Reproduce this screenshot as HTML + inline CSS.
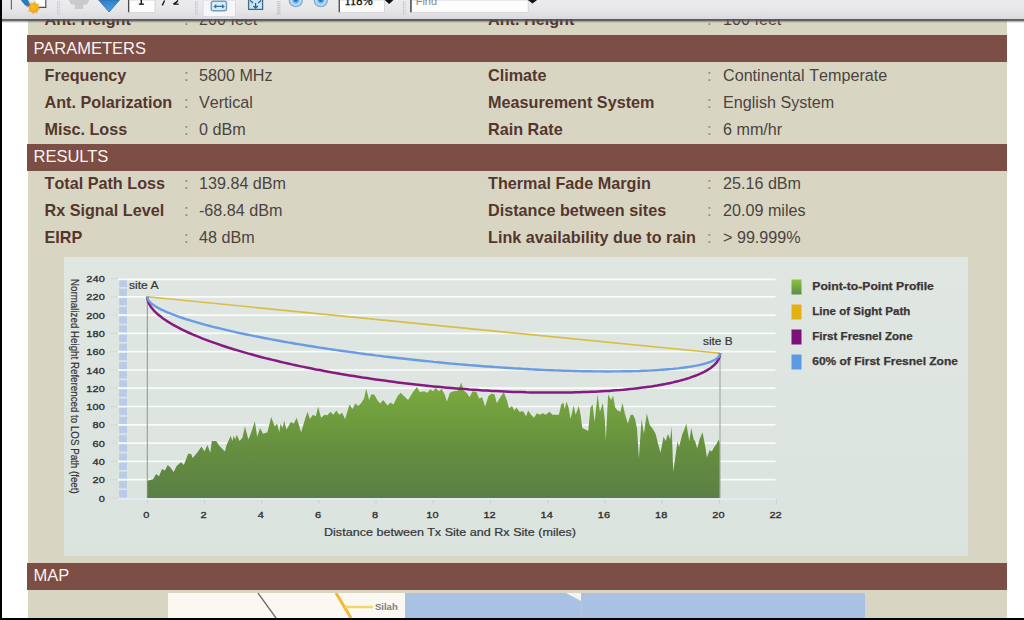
<!DOCTYPE html>
<html><head><meta charset="utf-8"><title>Report</title>
<style>
html,body{margin:0;padding:0;}
body{width:1024px;height:620px;overflow:hidden;background:#fff;position:relative;font-family:"Liberation Sans",sans-serif;}
.abs{position:absolute;}
#page{left:28px;top:18px;width:979px;height:602px;background:#d8d6c3;}
.bar{position:absolute;left:27px;width:980px;height:27px;background:#7d4e45;color:#fbf3ee;font-size:16.5px;line-height:26px;}
.bar span{position:absolute;left:6.5px;top:0;}
.lbl{position:absolute;font-kerning:none;font-weight:bold;font-size:16.2px;color:#55362e;white-space:nowrap;line-height:20px;}
.val{position:absolute;font-kerning:none;font-size:16.15px;color:#4c433f;white-space:nowrap;line-height:20px;}
.col{position:absolute;font-size:16.5px;color:#8b857c;line-height:20px;}
#tb{left:0;top:0;width:1024px;height:19px;background:linear-gradient(#ececee,#e6e6e8 55%,#dadadd);}
#tbsh{left:0;top:18.5px;width:1024px;height:4.5px;background:linear-gradient(rgba(80,80,82,.92),rgba(80,80,82,.85) 38%,rgba(95,95,95,.4) 65%,rgba(120,120,120,0));}
#lb{left:0;top:0;width:2px;height:620px;background:#000;}
#bb{left:0;top:618px;width:1024px;height:2px;background:#000;}
</style></head><body>
<div id="page" class="abs"></div>

<!-- rows -->
<div class="lbl" style="left:44.5px;top:9.3px;">Ant. Height</div><div class="col" style="left:184px;top:9.3px;">:</div><div class="val" style="left:199px;top:9.3px;">200 feet</div>
<div class="lbl" style="left:488px;top:9.3px;">Ant. Height</div><div class="col" style="left:707px;top:9.3px;">:</div><div class="val" style="left:723px;top:9.3px;">100 feet</div>

<div class="bar" style="top:35px;"><span>PARAMETERS</span></div>
<div class="lbl" style="left:44.5px;top:64.5px;">Frequency</div><div class="col" style="left:184px;top:64.5px;">:</div><div class="val" style="left:199px;top:64.5px;">5800 MHz</div>
<div class="lbl" style="left:44.5px;top:91.5px;">Ant. Polarization</div><div class="col" style="left:184px;top:91.5px;">:</div><div class="val" style="left:199px;top:91.5px;">Vertical</div>
<div class="lbl" style="left:44.5px;top:118.5px;">Misc. Loss</div><div class="col" style="left:184px;top:118.5px;">:</div><div class="val" style="left:199px;top:118.5px;">0 dBm</div>
<div class="lbl" style="left:488px;top:64.5px;">Climate</div><div class="col" style="left:707px;top:64.5px;">:</div><div class="val" style="left:723px;top:64.5px;">Continental Temperate</div>
<div class="lbl" style="left:488px;top:91.5px;">Measurement System</div><div class="col" style="left:707px;top:91.5px;">:</div><div class="val" style="left:723px;top:91.5px;">English System</div>
<div class="lbl" style="left:488px;top:118.5px;">Rain Rate</div><div class="col" style="left:707px;top:118.5px;">:</div><div class="val" style="left:723px;top:118.5px;">6 mm/hr</div>

<div class="bar" style="top:144px;"><span style="top:-1px">RESULTS</span></div>
<div class="lbl" style="left:44.5px;top:173.4px;">Total Path Loss</div><div class="col" style="left:184px;top:173.4px;">:</div><div class="val" style="left:199px;top:173.4px;">139.84 dBm</div>
<div class="lbl" style="left:44.5px;top:200.4px;">Rx Signal Level</div><div class="col" style="left:184px;top:200.4px;">:</div><div class="val" style="left:199px;top:200.4px;">-68.84 dBm</div>
<div class="lbl" style="left:44.5px;top:227.4px;">EIRP</div><div class="col" style="left:184px;top:227.4px;">:</div><div class="val" style="left:199px;top:227.4px;">48 dBm</div>
<div class="lbl" style="left:488px;top:173.4px;">Thermal Fade Margin</div><div class="col" style="left:707px;top:173.4px;">:</div><div class="val" style="left:723px;top:173.4px;">25.16 dBm</div>
<div class="lbl" style="left:488px;top:200.4px;">Distance between sites</div><div class="col" style="left:707px;top:200.4px;">:</div><div class="val" style="left:723px;top:200.4px;">20.09 miles</div>
<div class="lbl" style="left:488px;top:227.4px;">Link availability due to rain</div><div class="col" style="left:707px;top:227.4px;">:</div><div class="val" style="left:723px;top:227.4px;">&gt; 99.999%</div>

<!-- chart -->
<svg class="abs" style="left:0;top:0;" width="1024" height="620" viewBox="0 0 1024 620">
<defs>
<linearGradient id="tg" x1="0" y1="0" x2="0" y2="1" gradientUnits="userSpaceOnUse" >
<stop offset="0" stop-color="#7aab3c"/><stop offset="1" stop-color="#547c3a"/></linearGradient>
<linearGradient id="tg2" gradientUnits="userSpaceOnUse" x1="0" y1="381" x2="0" y2="498">
<stop offset="0" stop-color="#7cad3e"/><stop offset="0.55" stop-color="#66903f"/><stop offset="1" stop-color="#5a7f45"/></linearGradient>
<linearGradient id="lg" x1="0" y1="0" x2="0" y2="1"><stop offset="0" stop-color="#8bc53a"/><stop offset="1" stop-color="#5d8a48"/></linearGradient>
<linearGradient id="pg" x1="0" y1="0" x2="0" y2="1"><stop offset="0" stop-color="#e0e7e3"/><stop offset="1" stop-color="#dbe3df"/></linearGradient>
</defs>
<rect x="64" y="257" width="904" height="299" fill="url(#pg)"/>
<g><rect x="119.2" y="490.0" width="7.8" height="7.5" fill="#b9cbe6"/><rect x="119.2" y="480.8" width="7.8" height="7.5" fill="#b9cbe6"/><rect x="119.2" y="471.7" width="7.8" height="7.5" fill="#b9cbe6"/><rect x="119.2" y="462.5" width="7.8" height="7.5" fill="#b9cbe6"/><rect x="119.2" y="453.4" width="7.8" height="7.5" fill="#b9cbe6"/><rect x="119.2" y="444.2" width="7.8" height="7.5" fill="#b9cbe6"/><rect x="119.2" y="435.1" width="7.8" height="7.5" fill="#b9cbe6"/><rect x="119.2" y="425.9" width="7.8" height="7.5" fill="#b9cbe6"/><rect x="119.2" y="416.8" width="7.8" height="7.5" fill="#b9cbe6"/><rect x="119.2" y="407.6" width="7.8" height="7.5" fill="#b9cbe6"/><rect x="119.2" y="398.5" width="7.8" height="7.5" fill="#b9cbe6"/><rect x="119.2" y="389.3" width="7.8" height="7.5" fill="#b9cbe6"/><rect x="119.2" y="380.2" width="7.8" height="7.5" fill="#b9cbe6"/><rect x="119.2" y="371.1" width="7.8" height="7.5" fill="#b9cbe6"/><rect x="119.2" y="361.9" width="7.8" height="7.5" fill="#b9cbe6"/><rect x="119.2" y="352.8" width="7.8" height="7.5" fill="#b9cbe6"/><rect x="119.2" y="343.6" width="7.8" height="7.5" fill="#b9cbe6"/><rect x="119.2" y="334.5" width="7.8" height="7.5" fill="#b9cbe6"/><rect x="119.2" y="325.3" width="7.8" height="7.5" fill="#b9cbe6"/><rect x="119.2" y="316.2" width="7.8" height="7.5" fill="#b9cbe6"/><rect x="119.2" y="307.0" width="7.8" height="7.5" fill="#b9cbe6"/><rect x="119.2" y="297.9" width="7.8" height="7.5" fill="#b9cbe6"/><rect x="119.2" y="288.7" width="7.8" height="7.5" fill="#b9cbe6"/><rect x="119.2" y="279.6" width="7.8" height="7.5" fill="#b9cbe6"/></g>
<g><line x1="110" y1="498.0" x2="118" y2="498.0" stroke="#d2d8d6" stroke-width="1"/><line x1="110" y1="479.7" x2="118" y2="479.7" stroke="#d2d8d6" stroke-width="1"/><line x1="110" y1="461.4" x2="118" y2="461.4" stroke="#d2d8d6" stroke-width="1"/><line x1="110" y1="443.1" x2="118" y2="443.1" stroke="#d2d8d6" stroke-width="1"/><line x1="110" y1="424.8" x2="118" y2="424.8" stroke="#d2d8d6" stroke-width="1"/><line x1="110" y1="406.5" x2="118" y2="406.5" stroke="#d2d8d6" stroke-width="1"/><line x1="110" y1="388.2" x2="118" y2="388.2" stroke="#d2d8d6" stroke-width="1"/><line x1="110" y1="370.0" x2="118" y2="370.0" stroke="#d2d8d6" stroke-width="1"/><line x1="110" y1="351.7" x2="118" y2="351.7" stroke="#d2d8d6" stroke-width="1"/><line x1="110" y1="333.4" x2="118" y2="333.4" stroke="#d2d8d6" stroke-width="1"/><line x1="110" y1="315.1" x2="118" y2="315.1" stroke="#d2d8d6" stroke-width="1"/><line x1="110" y1="296.8" x2="118" y2="296.8" stroke="#d2d8d6" stroke-width="1"/><line x1="110" y1="278.5" x2="118" y2="278.5" stroke="#d2d8d6" stroke-width="1"/><line x1="147.3" y1="499.5" x2="147.3" y2="503.5" stroke="#c3d0e8" stroke-width="1.2"/><line x1="204.5" y1="499.5" x2="204.5" y2="503.5" stroke="#c3d0e8" stroke-width="1.2"/><line x1="261.7" y1="499.5" x2="261.7" y2="503.5" stroke="#c3d0e8" stroke-width="1.2"/><line x1="318.9" y1="499.5" x2="318.9" y2="503.5" stroke="#c3d0e8" stroke-width="1.2"/><line x1="376.1" y1="499.5" x2="376.1" y2="503.5" stroke="#c3d0e8" stroke-width="1.2"/><line x1="433.3" y1="499.5" x2="433.3" y2="503.5" stroke="#c3d0e8" stroke-width="1.2"/><line x1="490.5" y1="499.5" x2="490.5" y2="503.5" stroke="#c3d0e8" stroke-width="1.2"/><line x1="547.7" y1="499.5" x2="547.7" y2="503.5" stroke="#c3d0e8" stroke-width="1.2"/><line x1="604.9" y1="499.5" x2="604.9" y2="503.5" stroke="#c3d0e8" stroke-width="1.2"/><line x1="662.1" y1="499.5" x2="662.1" y2="503.5" stroke="#c3d0e8" stroke-width="1.2"/><line x1="719.3" y1="499.5" x2="719.3" y2="503.5" stroke="#c3d0e8" stroke-width="1.2"/><line x1="776.5" y1="499.5" x2="776.5" y2="503.5" stroke="#c3d0e8" stroke-width="1.2"/></g>
<g><line x1="118" y1="499" x2="775.5" y2="499" stroke="#e1e9f1" stroke-width="2"/><line x1="118" y1="479.7" x2="775.5" y2="479.7" stroke="#fff" stroke-width="1.7" opacity=".85"/><line x1="118" y1="461.4" x2="775.5" y2="461.4" stroke="#fff" stroke-width="1.7" opacity=".85"/><line x1="118" y1="443.1" x2="775.5" y2="443.1" stroke="#fff" stroke-width="1.7" opacity=".85"/><line x1="118" y1="424.8" x2="775.5" y2="424.8" stroke="#fff" stroke-width="1.7" opacity=".85"/><line x1="118" y1="406.5" x2="775.5" y2="406.5" stroke="#fff" stroke-width="1.7" opacity=".85"/><line x1="118" y1="388.2" x2="775.5" y2="388.2" stroke="#fff" stroke-width="1.7" opacity=".85"/><line x1="118" y1="370.0" x2="775.5" y2="370.0" stroke="#fff" stroke-width="1.7" opacity=".85"/><line x1="118" y1="351.7" x2="775.5" y2="351.7" stroke="#fff" stroke-width="1.7" opacity=".85"/><line x1="118" y1="333.4" x2="775.5" y2="333.4" stroke="#fff" stroke-width="1.7" opacity=".85"/><line x1="118" y1="315.1" x2="775.5" y2="315.1" stroke="#fff" stroke-width="1.7" opacity=".85"/><line x1="118" y1="296.8" x2="775.5" y2="296.8" stroke="#fff" stroke-width="1.7" opacity=".85"/><line x1="118" y1="279.3" x2="775.5" y2="279.3" stroke="#fff" stroke-width="1.7" opacity=".85"/></g>
<path d="M147.3,498.0 L147.3,480.7 L153.2,479.2 L156.1,473.9 L159.0,476.3 L162.0,468.9 L164.9,470.4 L167.8,465.1 L170.8,468.1 L173.7,471.9 L176.6,466.0 L181.0,462.2 L183.9,465.1 L188.3,453.4 L191.3,454.3 L192.7,458.1 L197.1,452.8 L201.5,446.4 L204.5,451.4 L207.4,444.9 L210.3,452.8 L211.8,441.1 L216.2,441.1 L219.1,445.5 L222.0,448.4 L225.0,451.4 L226.4,445.5 L230.8,435.8 L232.3,441.1 L233.8,435.8 L235.2,439.6 L236.7,434.7 L239.6,441.1 L242.5,437.6 L244.9,426.5 L248.4,439.6 L251.3,432.3 L254.8,421.2 L257.2,436.7 L260.1,427.9 L263.0,433.8 L267.4,432.3 L271.2,417.1 L274.8,426.5 L277.1,423.5 L279.2,432.3 L280.6,423.5 L282.7,427.9 L284.1,420.6 L286.5,429.4 L290.9,422.1 L293.8,423.5 L296.7,417.7 L301.1,432.3 L305.5,417.7 L307.6,411.8 L309.9,419.1 L312.9,414.7 L315.8,416.2 L318.1,406.5 L321.1,417.7 L324.6,414.7 L327.5,415.3 L330.4,411.8 L333.4,414.7 L336.3,410.4 L339.2,414.7 L342.1,412.7 L345.1,419.1 L349.5,404.5 L352.4,408.9 L355.3,403.6 L358.3,406.0 L361.2,403.0 L364.1,398.6 L366.2,388.4 L369.1,400.1 L371.4,394.2 L374.4,394.8 L377.3,400.1 L380.2,403.6 L383.2,400.1 L387.6,405.4 L390.5,402.4 L393.4,404.5 L397.8,395.7 L400.7,392.8 L403.7,395.7 L408.1,400.1 L412.5,392.8 L416.9,386.9 L419.8,391.9 L424.2,391.3 L427.1,392.8 L430.0,389.8 L430.0,389.0 L432.9,391.3 L435.9,387.8 L438.8,391.3 L441.7,389.0 L444.6,394.2 L447.0,401.6 L449.9,392.8 L453.4,391.3 L457.8,390.7 L461.3,382.5 L463.7,390.7 L466.6,392.8 L469.6,397.2 L472.5,391.3 L476.3,391.9 L479.2,398.6 L482.1,397.2 L485.1,406.5 L488.6,395.7 L491.5,393.7 L494.5,394.2 L496.8,403.0 L500.3,397.2 L503.8,391.9 L506.8,400.1 L509.1,408.3 L512.0,406.0 L514.4,410.4 L516.4,407.4 L519.4,411.8 L523.2,411.2 L526.1,416.2 L528.1,410.4 L531.1,414.7 L534.0,417.7 L536.9,413.3 L539.9,414.7 L542.8,413.3 L545.7,414.7 L549.5,411.8 L552.5,414.7 L556.0,414.7 L558.9,414.7 L561.2,404.5 L563.3,402.4 L564.8,408.9 L566.5,401.6 L568.6,407.4 L570.6,419.1 L573.6,405.4 L575.6,414.7 L578.8,406.0 L580.6,414.7 L582.3,427.9 L585.3,429.4 L588.2,430.9 L590.5,407.4 L592.6,404.5 L594.6,422.1 L597.6,394.2 L599.9,411.8 L602.9,403.0 L604.9,420.6 L605.8,441.1 L608.1,394.2 L611.1,400.1 L613.1,395.7 L615.2,407.4 L617.5,410.4 L620.4,411.8 L622.5,403.0 L624.8,413.3 L627.8,423.5 L630.7,414.7 L633.0,414.7 L635.1,419.1 L637.1,429.4 L638.9,458.7 L641.5,419.1 L643.9,433.8 L646.8,413.3 L649.7,425.0 L653.2,429.4 L655.6,433.8 L658.5,445.5 L660.6,452.8 L663.5,436.7 L665.8,441.1 L667.9,433.8 L670.2,439.6 L671.7,426.5 L673.2,471.9 L677.6,441.1 L679.0,447.0 L682.5,433.8 L684.9,427.9 L686.3,423.5 L689.3,441.1 L691.3,427.9 L693.7,439.6 L695.1,441.1 L697.2,448.4 L699.5,439.6 L702.5,432.3 L705.4,447.0 L706.9,457.2 L709.8,449.9 L711.8,451.4 L714.2,447.0 L716.5,444.0 L718.6,439.6 L720.0,444.0 L720.0,498.0 Z" fill="url(#tg2)"/>
<line x1="147.3" y1="297" x2="147.3" y2="498" stroke="#7f8f5c" stroke-width="1" opacity=".85"/>
<line x1="720" y1="353" x2="720" y2="498" stroke="#a9aaa0" stroke-width="1.2"/>
<line x1="147.3" y1="296.8" x2="720" y2="353.3" stroke="#d9bd44" stroke-width="1.6"/>
<path d="M147.3,296.8 L147.3,297.8 L147.4,298.7 L147.6,299.7 L147.9,300.7 L148.2,301.7 L148.6,302.7 L149.0,303.7 L149.6,304.7 L150.2,305.7 L150.8,306.7 L151.6,307.8 L152.4,308.8 L153.2,309.8 L154.2,310.9 L155.2,311.9 L156.3,312.9 L157.4,314.0 L158.7,315.0 L160.0,316.1 L161.3,317.1 L162.7,318.2 L164.2,319.3 L165.8,320.3 L167.4,321.4 L169.1,322.4 L170.9,323.5 L172.7,324.6 L174.6,325.6 L176.5,326.7 L178.5,327.7 L180.6,328.8 L182.7,329.9 L184.9,330.9 L187.2,332.0 L189.5,333.0 L191.9,334.1 L194.3,335.1 L196.8,336.2 L199.4,337.2 L202.0,338.3 L204.7,339.3 L207.4,340.3 L210.2,341.4 L213.0,342.4 L215.9,343.4 L218.9,344.4 L221.9,345.5 L224.9,346.5 L228.0,347.5 L231.2,348.5 L234.4,349.5 L237.6,350.4 L240.9,351.4 L244.3,352.4 L247.7,353.4 L251.1,354.3 L254.6,355.3 L258.1,356.2 L261.7,357.2 L265.3,358.1 L269.0,359.0 L272.7,359.9 L276.4,360.8 L280.2,361.7 L284.0,362.6 L287.9,363.5 L291.8,364.4 L295.7,365.2 L299.7,366.1 L303.6,366.9 L307.7,367.7 L311.7,368.5 L315.8,369.4 L319.9,370.1 L324.1,370.9 L328.2,371.7 L332.4,372.5 L336.7,373.2 L340.9,374.0 L345.2,374.7 L349.5,375.4 L353.8,376.1 L358.1,376.8 L362.4,377.5 L366.8,378.1 L371.2,378.8 L375.6,379.4 L380.0,380.0 L384.4,380.6 L388.9,381.2 L393.3,381.8 L397.8,382.4 L402.2,382.9 L406.7,383.5 L411.2,384.0 L415.7,384.5 L420.2,385.0 L424.7,385.5 L429.2,386.0 L433.6,386.4 L438.1,386.8 L442.6,387.3 L447.1,387.7 L451.6,388.1 L456.1,388.4 L460.6,388.8 L465.1,389.1 L469.5,389.5 L474.0,389.8 L478.4,390.1 L482.9,390.4 L487.3,390.6 L491.7,390.9 L496.1,391.1 L500.5,391.3 L504.9,391.5 L509.2,391.7 L513.5,391.9 L517.8,392.0 L522.1,392.1 L526.4,392.3 L530.6,392.4 L534.9,392.4 L539.1,392.5 L543.2,392.6 L547.4,392.6 L551.5,392.6 L555.6,392.6 L559.6,392.6 L563.7,392.6 L567.6,392.5 L571.6,392.4 L575.5,392.3 L579.4,392.2 L583.3,392.1 L587.1,392.0 L590.9,391.8 L594.6,391.7 L598.3,391.5 L602.0,391.3 L605.6,391.1 L609.2,390.9 L612.7,390.6 L616.2,390.3 L619.6,390.1 L623.0,389.8 L626.4,389.4 L629.7,389.1 L632.9,388.8 L636.1,388.4 L639.3,388.0 L642.4,387.6 L645.4,387.2 L648.4,386.8 L651.4,386.4 L654.3,385.9 L657.1,385.5 L659.9,385.0 L662.6,384.5 L665.3,384.0 L667.9,383.4 L670.5,382.9 L673.0,382.4 L675.4,381.8 L677.8,381.2 L680.1,380.6 L682.4,380.0 L684.6,379.4 L686.7,378.7 L688.8,378.1 L690.8,377.4 L692.7,376.7 L694.6,376.0 L696.4,375.3 L698.2,374.6 L699.9,373.9 L701.5,373.2 L703.1,372.4 L704.6,371.7 L706.0,370.9 L707.3,370.1 L708.6,369.3 L709.9,368.5 L711.0,367.7 L712.1,366.8 L713.1,366.0 L714.1,365.2 L714.9,364.3 L715.7,363.4 L716.5,362.6 L717.1,361.7 L717.7,360.8 L718.3,359.9 L718.7,358.9 L719.1,358.0 L719.4,357.1 L719.7,356.2 L719.9,355.2 L720.0,354.3 L720.0,353.3" fill="none" stroke="#861a80" stroke-width="2.5"/>
<path d="M147.3,296.8 L147.3,297.4 L147.4,298.0 L147.6,298.6 L147.9,299.2 L148.2,299.8 L148.6,300.4 L149.0,301.0 L149.6,301.6 L150.2,302.3 L150.8,302.9 L151.6,303.6 L152.4,304.2 L153.2,304.9 L154.2,305.5 L155.2,306.2 L156.3,306.8 L157.4,307.5 L158.7,308.2 L160.0,308.9 L161.3,309.6 L162.7,310.2 L164.2,310.9 L165.8,311.6 L167.4,312.3 L169.1,313.0 L170.9,313.7 L172.7,314.5 L174.6,315.2 L176.5,315.9 L178.5,316.6 L180.6,317.3 L182.7,318.0 L184.9,318.8 L187.2,319.5 L189.5,320.2 L191.9,320.9 L194.3,321.7 L196.8,322.4 L199.4,323.1 L202.0,323.8 L204.7,324.6 L207.4,325.3 L210.2,326.0 L213.0,326.8 L215.9,327.5 L218.9,328.2 L221.9,328.9 L224.9,329.7 L228.0,330.4 L231.2,331.1 L234.4,331.8 L237.6,332.6 L240.9,333.3 L244.3,334.0 L247.7,334.7 L251.1,335.4 L254.6,336.1 L258.1,336.8 L261.7,337.5 L265.3,338.2 L269.0,338.9 L272.7,339.6 L276.4,340.3 L280.2,341.0 L284.0,341.7 L287.9,342.4 L291.8,343.0 L295.7,343.7 L299.7,344.4 L303.6,345.0 L307.7,345.7 L311.7,346.3 L315.8,347.0 L319.9,347.6 L324.1,348.3 L328.2,348.9 L332.4,349.5 L336.7,350.1 L340.9,350.7 L345.2,351.3 L349.5,351.9 L353.8,352.5 L358.1,353.1 L362.4,353.7 L366.8,354.3 L371.2,354.8 L375.6,355.4 L380.0,355.9 L384.4,356.5 L388.9,357.0 L393.3,357.5 L397.8,358.0 L402.2,358.5 L406.7,359.0 L411.2,359.5 L415.7,360.0 L420.2,360.5 L424.7,361.0 L429.2,361.4 L433.6,361.9 L438.1,362.3 L442.6,362.7 L447.1,363.2 L451.6,363.6 L456.1,364.0 L460.6,364.4 L465.1,364.7 L469.5,365.1 L474.0,365.5 L478.4,365.8 L482.9,366.2 L487.3,366.5 L491.7,366.8 L496.1,367.1 L500.5,367.4 L504.9,367.7 L509.2,368.0 L513.5,368.3 L517.8,368.5 L522.1,368.8 L526.4,369.0 L530.6,369.3 L534.9,369.5 L539.1,369.7 L543.2,369.9 L547.4,370.1 L551.5,370.2 L555.6,370.4 L559.6,370.5 L563.7,370.7 L567.6,370.8 L571.6,370.9 L575.5,371.0 L579.4,371.1 L583.3,371.2 L587.1,371.3 L590.9,371.3 L594.6,371.4 L598.3,371.4 L602.0,371.4 L605.6,371.5 L609.2,371.5 L612.7,371.4 L616.2,371.4 L619.6,371.4 L623.0,371.3 L626.4,371.3 L629.7,371.2 L632.9,371.1 L636.1,371.1 L639.3,371.0 L642.4,370.8 L645.4,370.7 L648.4,370.6 L651.4,370.4 L654.3,370.3 L657.1,370.1 L659.9,369.9 L662.6,369.7 L665.3,369.5 L667.9,369.3 L670.5,369.1 L673.0,368.9 L675.4,368.6 L677.8,368.4 L680.1,368.1 L682.4,367.8 L684.6,367.5 L686.7,367.2 L688.8,366.9 L690.8,366.6 L692.7,366.3 L694.6,365.9 L696.4,365.6 L698.2,365.2 L699.9,364.9 L701.5,364.5 L703.1,364.1 L704.6,363.7 L706.0,363.3 L707.3,362.9 L708.6,362.5 L709.9,362.0 L711.0,361.6 L712.1,361.1 L713.1,360.7 L714.1,360.2 L714.9,359.7 L715.7,359.2 L716.5,358.7 L717.1,358.2 L717.7,357.7 L718.3,357.2 L718.7,356.6 L719.1,356.1 L719.4,355.6 L719.7,355.0 L719.9,354.4 L720.0,353.9 L720.0,353.3" fill="none" stroke="#6a9ce2" stroke-width="2.4"/>
<g font-family="Liberation Sans, sans-serif" font-size="9.7" fill="#303030" stroke="#303030" stroke-width="0.35" letter-spacing="0.1"><text transform="translate(104.9,501.5) scale(1.13,1)" text-anchor="end">0</text><text transform="translate(104.9,483.2) scale(1.13,1)" text-anchor="end">20</text><text transform="translate(104.9,464.9) scale(1.13,1)" text-anchor="end">40</text><text transform="translate(104.9,446.6) scale(1.13,1)" text-anchor="end">60</text><text transform="translate(104.9,428.3) scale(1.13,1)" text-anchor="end">80</text><text transform="translate(104.9,410.0) scale(1.13,1)" text-anchor="end">100</text><text transform="translate(104.9,391.7) scale(1.13,1)" text-anchor="end">120</text><text transform="translate(104.9,373.5) scale(1.13,1)" text-anchor="end">140</text><text transform="translate(104.9,355.2) scale(1.13,1)" text-anchor="end">160</text><text transform="translate(104.9,336.9) scale(1.13,1)" text-anchor="end">180</text><text transform="translate(104.9,318.6) scale(1.13,1)" text-anchor="end">200</text><text transform="translate(104.9,300.3) scale(1.13,1)" text-anchor="end">220</text><text transform="translate(104.9,282.0) scale(1.13,1)" text-anchor="end">240</text><text transform="translate(146.4,518.3) scale(1.13,1)" text-anchor="middle">0</text><text transform="translate(203.6,518.3) scale(1.13,1)" text-anchor="middle">2</text><text transform="translate(260.8,518.3) scale(1.13,1)" text-anchor="middle">4</text><text transform="translate(318.0,518.3) scale(1.13,1)" text-anchor="middle">6</text><text transform="translate(375.2,518.3) scale(1.13,1)" text-anchor="middle">8</text><text transform="translate(432.4,518.3) scale(1.13,1)" text-anchor="middle">10</text><text transform="translate(489.6,518.3) scale(1.13,1)" text-anchor="middle">12</text><text transform="translate(546.8,518.3) scale(1.13,1)" text-anchor="middle">14</text><text transform="translate(604.0,518.3) scale(1.13,1)" text-anchor="middle">16</text><text transform="translate(661.2,518.3) scale(1.13,1)" text-anchor="middle">18</text><text transform="translate(718.4,518.3) scale(1.13,1)" text-anchor="middle">20</text><text transform="translate(775.6,518.3) scale(1.13,1)" text-anchor="middle">22</text></g>
<g font-family="Liberation Sans, sans-serif" font-size="10.4" fill="#363636" stroke="#363636" stroke-width="0.2">
<text x="324" y="536" textLength="252" lengthAdjust="spacingAndGlyphs">Distance between Tx Site and Rx Site (miles)</text>
<text x="129" y="289.3" textLength="29.6" lengthAdjust="spacingAndGlyphs">site A</text>
<text x="703" y="345.3" textLength="29.6" lengthAdjust="spacingAndGlyphs">site B</text>
<text transform="translate(70.5,279) rotate(90)" font-size="10.2" textLength="214.7" lengthAdjust="spacingAndGlyphs">Normalized Height Referenced to LOS Path (feet)</text>
</g>
<rect x="791.5" y="279.5" width="10" height="15" fill="url(#lg)"/>
<rect x="791.5" y="304.5" width="10" height="15" fill="#e2b213"/>
<rect x="791.5" y="329.5" width="10" height="15" fill="#7d1179"/>
<rect x="791.5" y="354.5" width="10" height="15" fill="#5b9be4"/>
<g font-family="Liberation Sans, sans-serif" font-size="10.4" font-weight="bold" fill="#3b3535" stroke="#3b3535" stroke-width="0.25">
<text x="812.3" y="289.6" textLength="121.6" lengthAdjust="spacingAndGlyphs">Point-to-Point Profile</text>
<text x="812.3" y="314.6" textLength="98" lengthAdjust="spacingAndGlyphs">Line of Sight Path</text>
<text x="812.3" y="339.6" textLength="100.3" lengthAdjust="spacingAndGlyphs">First Fresnel Zone</text>
<text x="812.3" y="364.6" textLength="145.6" lengthAdjust="spacingAndGlyphs">60% of First Fresnel Zone</text>
</g>
</svg>

<div class="bar" style="top:563px;"><span style="top:-0.8px">MAP</span></div>
<!-- map -->
<svg class="abs" style="left:168px;top:593px;" width="697" height="25" viewBox="0 0 697 25">
<rect width="697" height="25" fill="#fbf8f2"/>
<rect x="237" y="0" width="460" height="25" fill="#a9c2e3"/>
<polygon points="398,0 413,0 413,8" fill="#f4f4f6"/>
<rect x="412.5" y="8" width="1" height="17" fill="#b4cae6"/>
<line x1="90" y1="0" x2="108" y2="25" stroke="#6e6a6a" stroke-width="1.3"/>
<path d="M168,0 L183,25" stroke="#f3b83a" stroke-width="3" fill="none"/>
<path d="M177,14 L205,14" stroke="#f5d669" stroke-width="2.5" fill="none"/>
<text x="207" y="17" font-family="Liberation Sans, sans-serif" font-size="9.5" font-weight="bold" fill="#7d7d7d">Silah</text>
</svg>

<!-- toolbar -->
<div id="tb" class="abs"></div>
<div id="tbsh" class="abs"></div>
<svg class="abs" style="left:0;top:0.6px;overflow:visible;" width="1024" height="19" viewBox="0 0 1024 19">

<defs>
<radialGradient id="cb" cx="0.5" cy="0.5" r="0.5"><stop offset="0" stop-color="#2468b0"/><stop offset="0.28" stop-color="#3a88d2"/><stop offset="0.55" stop-color="#9fd4f8"/><stop offset="0.85" stop-color="#b5e0fb"/><stop offset="1" stop-color="#9cc0d8"/></radialGradient>
<radialGradient id="og" cx="0.45" cy="0.4" r="0.6"><stop offset="0" stop-color="#ffc21a"/><stop offset="0.7" stop-color="#f7a81a"/><stop offset="1" stop-color="#e8a43a"/></radialGradient>
<linearGradient id="ba" x1="0" y1="0" x2="0" y2="1"><stop offset="0" stop-color="#2f80c8"/><stop offset="1" stop-color="#4aa2e6"/></linearGradient>
</defs>
<!-- separator -->
<rect x="10.8" y="-1" width="1.2" height="9.5" fill="#6a6a6e"/>
<!-- icon 1 -->
<path d="M20.9,-1 L28,-1 L28.5,0 L31,4.5 L28,6 Q24,4 21.5,0 Z" fill="#2f78c4"/>
<path d="M30,-1 L45.5,-1 L45.5,6.3 L36,6.3 L36,-1 Z" fill="#fdfdfd"/>
<path d="M45.8,-1 L45.8,6.4 L37,6.4" fill="none" stroke="#4a4a55" stroke-width="1.1"/>
<circle cx="33.8" cy="6.9" r="5.1" fill="url(#og)"/>
<circle cx="33.8" cy="6.9" r="5.8" fill="none" stroke="#f3b944" stroke-width="1.4" stroke-dasharray="2.2 2.2" opacity=".8"/>
<rect x="57.2" y="0.3" width="1.2" height="1" fill="#b9b9c0"/><rect x="59.0" y="0.3" width="1.2" height="1" fill="#c9c9ce"/><rect x="57.2" y="2.3" width="1.2" height="1" fill="#b9b9c0"/><rect x="59.0" y="2.3" width="1.2" height="1" fill="#c9c9ce"/><rect x="57.2" y="4.3" width="1.2" height="1" fill="#b9b9c0"/><rect x="59.0" y="4.3" width="1.2" height="1" fill="#c9c9ce"/><rect x="57.2" y="6.3" width="1.2" height="1" fill="#b9b9c0"/><rect x="59.0" y="6.3" width="1.2" height="1" fill="#c9c9ce"/><rect x="57.2" y="8.3" width="1.2" height="1" fill="#b9b9c0"/><rect x="59.0" y="8.3" width="1.2" height="1" fill="#c9c9ce"/><rect x="57.2" y="10.3" width="1.2" height="1" fill="#b9b9c0"/><rect x="59.0" y="10.3" width="1.2" height="1" fill="#c9c9ce"/><rect x="57.2" y="12.3" width="1.2" height="1" fill="#b9b9c0"/><rect x="59.0" y="12.3" width="1.2" height="1" fill="#c9c9ce"/>
<!-- grey up arrow (disabled) -->
<path d="M68.8,-1 L89.3,-1 L87,3.6 L83.3,3.6 L83.3,8 L74.8,8 L74.8,3.6 L71,3.6 Z" fill="#c6c6c9" opacity=".9"/>
<!-- blue down arrow -->
<path d="M98.7,-1 L119.5,-1 L109.1,11 Z" fill="url(#ba)" stroke="#2c6fae" stroke-width="0.8"/>
<!-- page input -->
<rect x="128.2" y="-1" width="26.8" height="12.6" fill="#fdfdfc" stroke="#d6d6da" stroke-width="1"/>
<rect x="128" y="-1" width="1.3" height="12.2" fill="#4a4a4e"/>
<rect x="140.6" y="-1" width="1.4" height="4.2" fill="#111"/><rect x="138.8" y="2.5" width="5.1" height="1.3" fill="#111"/>
<path d="M164.6,-0.5 L162.3,4.4" stroke="#111" stroke-width="1.3"/>
<path d="M178,-0.5 Q176.5,1.5 173.4,3.1 L178.7,3.1" fill="none" stroke="#111" stroke-width="1.3"/>
<rect x="195.0" y="0.3" width="1.2" height="1" fill="#b9b9c0"/><rect x="196.8" y="0.3" width="1.2" height="1" fill="#c9c9ce"/><rect x="195.0" y="2.3" width="1.2" height="1" fill="#b9b9c0"/><rect x="196.8" y="2.3" width="1.2" height="1" fill="#c9c9ce"/><rect x="195.0" y="4.3" width="1.2" height="1" fill="#b9b9c0"/><rect x="196.8" y="4.3" width="1.2" height="1" fill="#c9c9ce"/><rect x="195.0" y="6.3" width="1.2" height="1" fill="#b9b9c0"/><rect x="196.8" y="6.3" width="1.2" height="1" fill="#c9c9ce"/><rect x="195.0" y="8.3" width="1.2" height="1" fill="#b9b9c0"/><rect x="196.8" y="8.3" width="1.2" height="1" fill="#c9c9ce"/><rect x="195.0" y="10.3" width="1.2" height="1" fill="#b9b9c0"/><rect x="196.8" y="10.3" width="1.2" height="1" fill="#c9c9ce"/><rect x="195.0" y="12.3" width="1.2" height="1" fill="#b9b9c0"/><rect x="196.8" y="12.3" width="1.2" height="1" fill="#c9c9ce"/>
<!-- active button -->
<rect x="203" y="-1" width="32.5" height="16.6" rx="1.5" fill="#f6f6f8" stroke="#d9d9de" stroke-width="1"/>
<rect x="211.3" y="0.2" width="15.2" height="9.6" rx="2" fill="#d6edfc" stroke="#7d9cba" stroke-width="1.5"/>
<path d="M214.3,5.4 L224,5.4 M216.3,3.6 L214.3,5.4 L216.3,7.2 M222,3.6 L224,5.4 L222,7.2" fill="none" stroke="#3b6f9c" stroke-width="1.1"/>
<!-- fit page -->
<rect x="248.6" y="-2" width="14" height="10.4" fill="#c4e5fa" stroke="#4b6a86" stroke-width="1.3"/>
<path d="M255.6,2 L255.6,7 M253.4,5 L255.6,7.2 L257.8,5 M250,-0.6 L253,2 M261.2,-0.6 L258.2,2" fill="none" stroke="#2d5a86" stroke-width="1.2"/>
<rect x="277.4" y="0.3" width="1.2" height="1" fill="#a4a4ac"/><rect x="279.2" y="0.3" width="1.2" height="1" fill="#b8b8be"/><rect x="277.4" y="2.3" width="1.2" height="1" fill="#a4a4ac"/><rect x="279.2" y="2.3" width="1.2" height="1" fill="#b8b8be"/><rect x="277.4" y="4.3" width="1.2" height="1" fill="#a4a4ac"/><rect x="279.2" y="4.3" width="1.2" height="1" fill="#b8b8be"/><rect x="277.4" y="6.3" width="1.2" height="1" fill="#a4a4ac"/><rect x="279.2" y="6.3" width="1.2" height="1" fill="#b8b8be"/><rect x="277.4" y="8.3" width="1.2" height="1" fill="#a4a4ac"/><rect x="279.2" y="8.3" width="1.2" height="1" fill="#b8b8be"/><rect x="277.4" y="10.3" width="1.2" height="1" fill="#a4a4ac"/><rect x="279.2" y="10.3" width="1.2" height="1" fill="#b8b8be"/><rect x="277.4" y="12.3" width="1.2" height="1" fill="#a4a4ac"/><rect x="279.2" y="12.3" width="1.2" height="1" fill="#b8b8be"/>
<!-- zoom circles -->
<circle cx="295.8" cy="-1" r="6.6" fill="url(#cb)" stroke="#8fabc2" stroke-width="1.3"/>
<circle cx="320.8" cy="-1" r="6.6" fill="url(#cb)" stroke="#8fabc2" stroke-width="1.3"/>
<!-- zoom input -->
<rect x="339.2" y="-1" width="45.3" height="12.4" fill="#fdfdfc" stroke="#d6d6da" stroke-width="1"/>
<rect x="338.6" y="-1" width="1.3" height="12.2" fill="#4a4a4e"/>
<text x="344.4" y="3.5" font-family="Liberation Serif, serif" font-size="12" stroke="#111" stroke-width="0.3" textLength="28.3" lengthAdjust="spacingAndGlyphs" fill="#111">118%</text>
<path d="M384.7,-1 L393.5,-1 L389.1,2.9 Z" fill="#111"/>
<rect x="402.8" y="0.3" width="1.2" height="1" fill="#b9b9c0"/><rect x="404.6" y="0.3" width="1.2" height="1" fill="#c9c9ce"/><rect x="402.8" y="2.3" width="1.2" height="1" fill="#b9b9c0"/><rect x="404.6" y="2.3" width="1.2" height="1" fill="#c9c9ce"/><rect x="402.8" y="4.3" width="1.2" height="1" fill="#b9b9c0"/><rect x="404.6" y="4.3" width="1.2" height="1" fill="#c9c9ce"/><rect x="402.8" y="6.3" width="1.2" height="1" fill="#b9b9c0"/><rect x="404.6" y="6.3" width="1.2" height="1" fill="#c9c9ce"/><rect x="402.8" y="8.3" width="1.2" height="1" fill="#b9b9c0"/><rect x="404.6" y="8.3" width="1.2" height="1" fill="#c9c9ce"/><rect x="402.8" y="10.3" width="1.2" height="1" fill="#b9b9c0"/><rect x="404.6" y="10.3" width="1.2" height="1" fill="#c9c9ce"/><rect x="402.8" y="12.3" width="1.2" height="1" fill="#b9b9c0"/><rect x="404.6" y="12.3" width="1.2" height="1" fill="#c9c9ce"/>
<!-- find input -->
<rect x="411" y="-1" width="117.2" height="12.4" fill="#fdfdfc" stroke="#d6d6da" stroke-width="1"/>
<rect x="410.2" y="-1" width="1.5" height="12.2" fill="#4a4a4e"/>
<text x="415.7" y="4.3" font-family="Liberation Sans, sans-serif" font-size="11" fill="#8a8a8a">Find</text>
<path d="M527.9,-1 L537.1,-1 L532.5,2.6 Z" fill="#111"/>

</svg>
<div id="lb" class="abs"></div>
<div id="bb" class="abs"></div>
</body></html>
